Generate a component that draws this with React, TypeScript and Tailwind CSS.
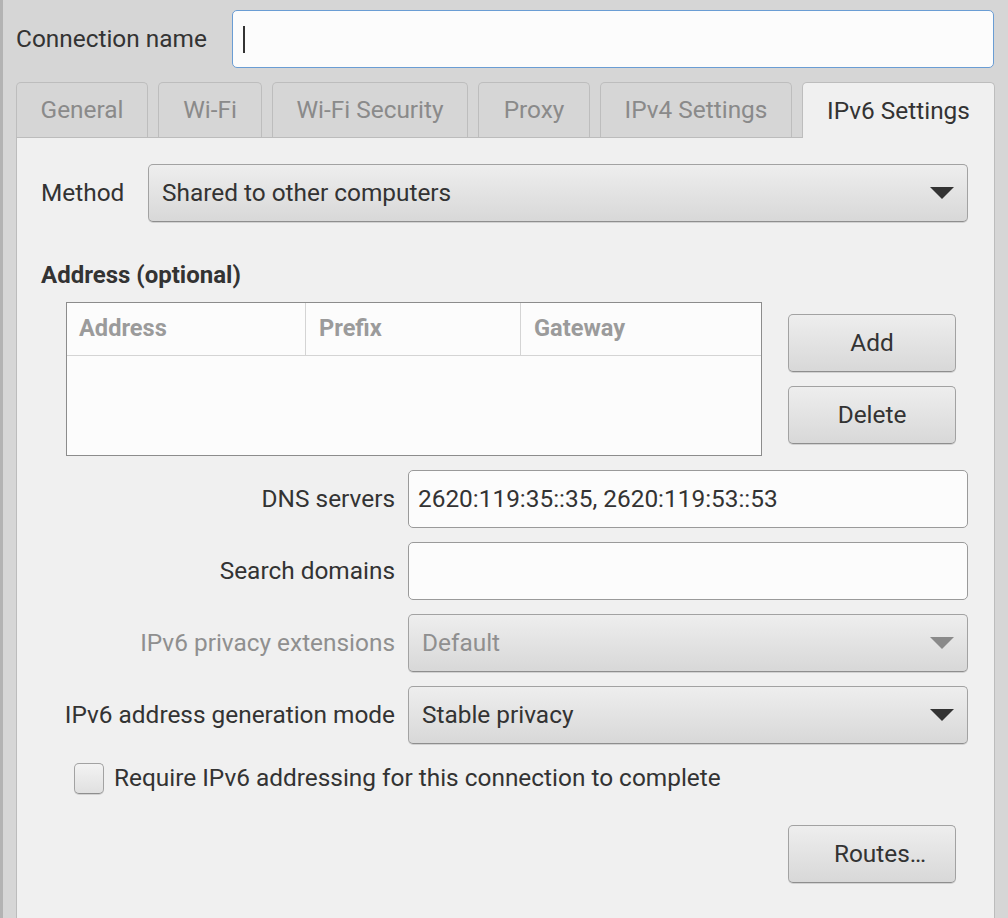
import React from 'react'

const raised =
  'rounded-[5px] border border-[#a2a2a2] border-b-[#8e8e8e] bg-linear-to-b from-[#eeeeee] to-[#d8d8d8] shadow-[0_1px_0_#d2d2d2]'

function Arrow({ disabled = false }: { disabled?: boolean }) {
  return (
    <svg width="24" height="12" viewBox="0 0 24 12" className="shrink-0">
      <polygon points="0,0 24,0 12,12" fill={disabled ? '#8a8a8a' : '#333333'} />
    </svg>
  )
}

function Combo({ value, disabled = false }: { value: string; disabled?: boolean }) {
  return (
    <div className={`flex h-[58px] items-center justify-between pl-[13px] pr-[13px] ${raised}`}>
      <span className={disabled ? 'text-[#8f8f8f]' : 'text-[#333]'}>{value}</span>
      <Arrow disabled={disabled} />
    </div>
  )
}

function Button({ children, shift = '' }: { children: React.ReactNode; shift?: string }) {
  return (
    <div className={`flex h-[58px] w-[168px] items-center justify-center ${shift} ${raised}`}>
      {children}
    </div>
  )
}

function Entry({ value = '' }: { value?: string }) {
  return (
    <div className="flex h-[58px] items-center rounded-[5px] border border-[#9a9a9a] bg-[#fcfcfc] pl-[9px]">
      {value}
    </div>
  )
}

const tabs = [
  { name: 'General', w: 'w-[132px]' },
  { name: 'Wi-Fi', w: 'w-[104px]' },
  { name: 'Wi-Fi Security', w: 'w-[196px]' },
  { name: 'Proxy', w: 'w-[112px]' },
  { name: 'IPv4 Settings', w: 'w-[192px]' },
]

export default function App() {
  return (
    <div className="flex h-[918px] w-[1008px] overflow-hidden bg-[#d6d6d6] font-['Roboto','Liberation_Sans',sans-serif] text-[24.4px] leading-none text-[#333]">
      <div className="w-[3px] shrink-0 bg-[#b3b3b3]" />
      <div className="flex flex-1 flex-col pl-[13px] pr-[13px] pt-[10px]">
        {/* connection name */}
        <div className="flex h-[58px] items-center">
          <span>Connection name</span>
          <div className="ml-auto mr-px flex h-[58px] w-[762px] items-center rounded-[5px] border border-[#6a9dd4] bg-[#fcfcfc] pl-[10px]">
            <div className="h-[27px] w-[2px] bg-[#333]" />
          </div>
        </div>

        {/* tabs */}
        <div className="mt-[14px] flex items-end gap-[10px] border-b border-[#bcbcbc]">
          {tabs.map((t) => (
            <div
              key={t.name}
              className={`flex h-[55px] ${t.w} items-center justify-center rounded-t-[5px] border border-b-0 border-[#bdbdbd] text-[#8a8a8a]`}
            >
              {t.name}
            </div>
          ))}
          <div className="relative -mb-px flex h-[56px] w-[193px] items-center justify-center rounded-t-[5px] border border-b-0 border-[#bdbdbd] bg-[#f0f0f0] pt-px text-[#333]">
            IPv6 Settings
          </div>
        </div>

        {/* page */}
        <div className="flex flex-1 flex-col border-x border-[#bcbcbc] bg-[#f0f0f0] pl-[24px] pr-[26px] pt-[26px]">
          <div className="flex h-[58px] items-center">
            <span className="w-[107px] shrink-0">Method</span>
            <div className="flex-1">
              <Combo value="Shared to other computers" />
            </div>
          </div>

          <div className="mt-[41px] text-[24px] font-bold">Address (optional)</div>

          <div className="mt-[15px] flex">
            <div className="ml-[25px] flex h-[154px] w-[696px] flex-col border border-[#8c8c8c] bg-[#fcfcfc]">
              <div className="flex h-[53px] border-b border-[#d4d4d4] text-[23.6px] font-bold text-[#9b9b9b]">
                <div className="flex w-[239px] items-center border-r border-[#d4d4d4] pl-[12px]">Address</div>
                <div className="flex w-[215px] items-center border-r border-[#d4d4d4] pl-[13px]">Prefix</div>
                <div className="flex flex-1 items-center pl-[13px]">Gateway</div>
              </div>
            </div>
            <div className="ml-[26px] mt-[12px] flex flex-col gap-[14px]">
              <Button>Add</Button>
              <Button>Delete</Button>
            </div>
          </div>

          <div className="mt-[14px] grid grid-cols-[354px_560px] gap-x-[13px] gap-y-[14px]">
            <span className="self-center text-right">DNS servers</span>
            <Entry value="2620:119:35::35, 2620:119:53::53" />
            <span className="self-center text-right">Search domains</span>
            <Entry />
            <span className="self-center text-right text-[#8f8f8f]">IPv6 privacy extensions</span>
            <Combo value="Default" disabled />
            <span className="self-center text-right">IPv6 address generation mode</span>
            <Combo value="Stable privacy" />
          </div>

          <div className="mt-[19px] flex items-center pl-[33px]">
            <div className="h-[31px] w-[30px] rounded-[5px] border border-[#a2a2a2] border-b-[#8e8e8e] bg-linear-to-b from-[#f3f3f3] to-[#e0e0e0] shadow-[0_1px_0_#d2d2d2]" />
            <span className="ml-[10px]">Require IPv6 addressing for this connection to complete</span>
          </div>

          <div className="mr-[12px] mt-[31px] self-end">
            <Button shift="pl-[16px]">Routes…</Button>
          </div>
        </div>
      </div>
    </div>
  )
}
